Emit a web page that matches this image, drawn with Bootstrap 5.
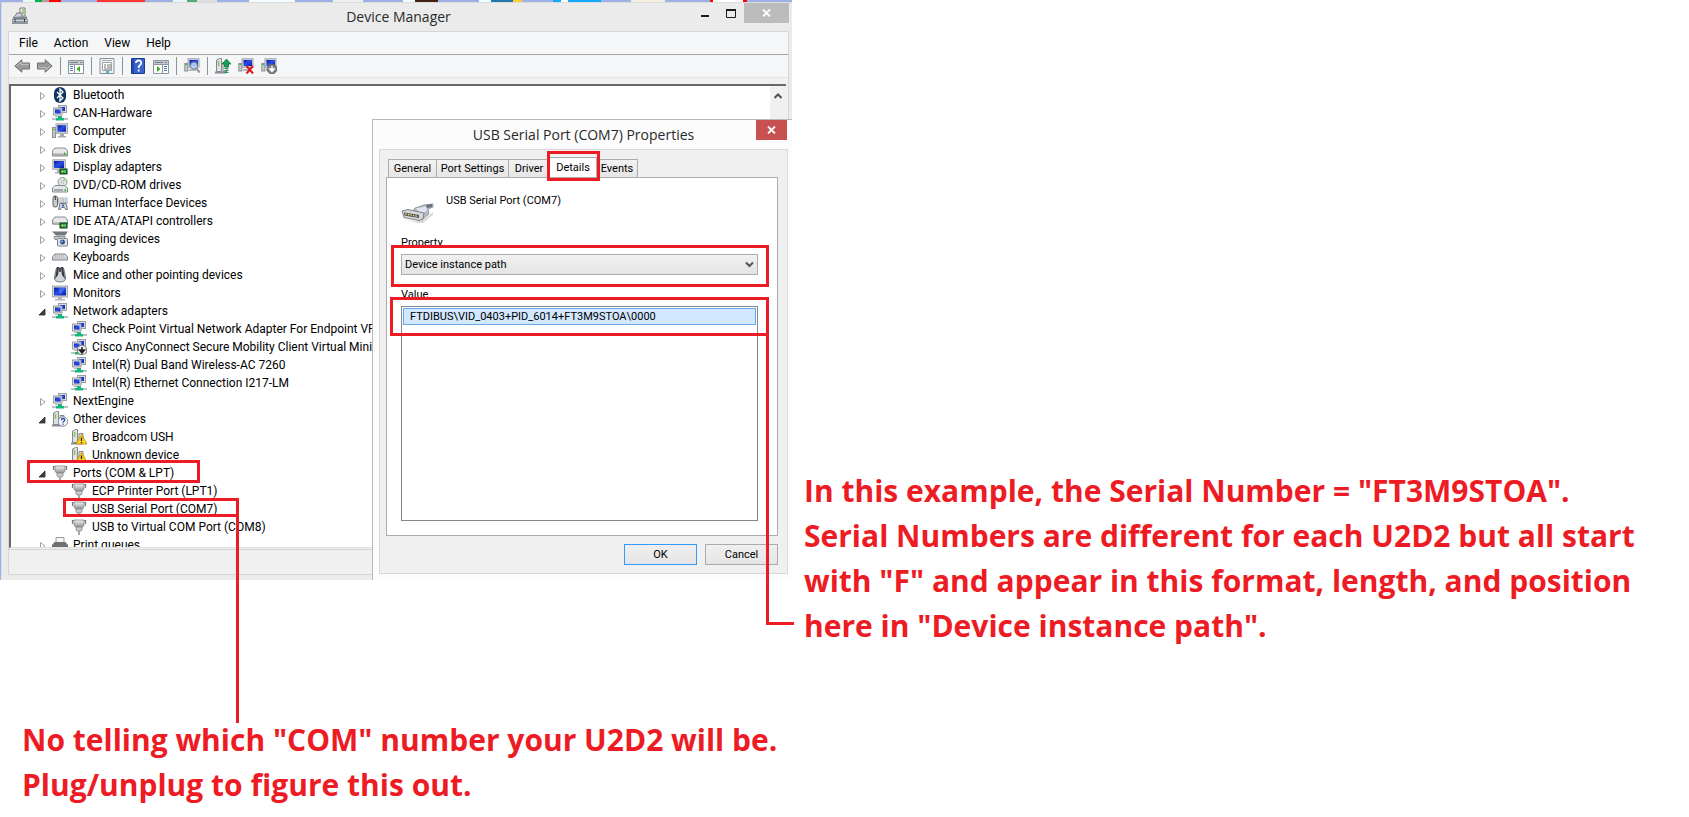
<!DOCTYPE html>
<html lang="en">
<head>
<meta charset="utf-8">
<meta name="viewport" content="width=device-width, initial-scale=1">
<title>Finding the U2D2 serial number</title>
<link href="https://cdn.jsdelivr.net/npm/bootstrap@5.3.0/dist/css/bootstrap.min.css" rel="stylesheet">
<style>
  :root { --ink: #ed1c24; }
  body { background: #fff; color: #000; font-family: Roboto, "Open Sans", sans-serif; font-size: 12px; line-height: 18px; }
  button, select { font-family: inherit; }
  .guide { display: grid; grid-template-columns: minmax(0, 792px) minmax(0, 1fr); }
  .callout-text { color: var(--ink); font: bold 30px/45px "Open Sans", "Noto Sans", sans-serif; }
  .callout-side { padding: 468px 0 0 12px; }
  .callout-below { grid-column: 1 / -1; padding: 69px 0 0 22px; }

  /* red pen marks */
  .pen { position: absolute; border: 3px solid var(--ink); pointer-events: none; z-index: 3; }
  .pen-ports { left: 27px; top: 460px; width: 173px; height: 23px; }
  .pen-com7 { left: 63px; top: 498px; width: 176px; height: 19px; }
  .pen-com7-line { left: 236px; top: 514px; height: 209px; border-width: 0 0 0 3px; }
  .pen-tab { inset: -7px -4px -4px -3px; }
  .pen-property { inset: -9px -11px -12px -10px; }
  .pen-value { left: -11px; right: -11px; top: -9px; height: 39px; }
  .pen-value-line { right: -36px; top: 27px; width: 28px; height: 292px; border-width: 0 0 3px 3px; }

  /* device manager window */
  .desk { background: #ebebeb; border-left: 1px solid #9db1e5; height: 580px; }
  .desk-strip { height: 2px; background: linear-gradient(90deg, #9db1e5 0 22px, #e8f8f8 22px 34px, #00b050 34px 41px, #b99 41px 48px, #f00 48px 60px, #9db1e5 60px 96px, #f33 96px 144px, #9db1e5 144px 172px, #e8f8f8 172px 186px, #5a7 186px 196px, #ddd 196px 216px, #9db1e5 216px 248px, #f4fcff 248px 294px, #9db1e5 294px 332px, #eee 332px 362px, #9db1e5 362px 402px, #eff 402px 414px, #421 414px 437px, #9db1e5 437px 478px, #eff 478px 490px, #27a 490px 512px, #fc3 512px 521px, #9db1e5 521px 552px, #1af 552px 560px, #fff 560px 567px, #1af 567px 600px, #9db1e5 600px 630px, #f5f0e0 630px 664px, #9db1e5 664px 709px, #f00 709px 712px, #fff 712px 742px, #f00 742px 746px, #9db1e5 746px); }
  .desk-frame { border-left: 1px solid #d3d9ea; border-top: 1px solid #dcdcdc; padding: 0 3px 0 6px; }
  .title-row { display: grid; grid-template-columns: 1fr auto 1fr; height: 28px; }
  .win-title { font: 14px/28px "Open Sans", sans-serif; color: #2a2a2a; }
  .win-btn { border: 0; padding: 0; background: none; height: 20px; width: 26px; display: flex; align-items: center; justify-content: center; }
  .win-close { width: 45px; background: #bcbcbc; }
  .client { border: 1px solid #d5d6d8; background: #f0f0f0; }
  .menu-row { height: 23px; background: #f5f6f7; border-bottom: 1px solid #a5a5a5; padding-left: 10px; gap: 16px; }
  .menu-row button, .tool-row button { border: 0; background: none; padding: 0; line-height: 16px; }
  .tool-row { height: 23px; background: #f5f6f7; border-bottom: 1px solid #e3e4e6; padding-left: 5px; gap: 7px; margin-bottom: 6px; }
  .tool-row svg, .tree svg { display: block; width: 16px; height: 16px; flex: none; }
  .tool-sep { width: 1px; height: 18px; background: #929292; }
  .tree-pane { height: 464px; background: #fff; border: solid #686868; border-width: 2px 0 0 2px; border-bottom: 1px solid #e0e0e0; overflow: hidden; margin-right: 2px; }
  .tree-scroll { width: 16px; background: #f0f0f0; padding: 6px 4px; }
  .tree { white-space: nowrap; }
  .tree .entry { display: flex; align-items: center; height: 18px; padding-left: 27px; }
  .tree .entry svg { margin-right: 5px; }
  .tree .entry svg.twist { width: 14px; margin: 0; }
  .tree ul .entry { padding-left: 60px; }
  .status-row { height: 25px; margin-top: 1px; border-top: 1px solid #d5d6d8; }

  /* properties dialog */
  .dialog-box { position: absolute; top: 119px; right: 0; width: 420px; height: 461px; z-index: 2; background: #fcfcfc; border: solid #b9b9b9; border-width: 1px 0 0 1px; padding: 0 4px 0 6px; font-size: 11px; line-height: 16px; }
  .dialog-title { position: relative; height: 29px; text-align: center; font: 14px/29px "Open Sans", sans-serif; color: #2a2a2a; }
  .dialog-close { position: absolute; top: 0; right: 1px; width: 31px; background: #c75050; }
  .dialog-client { border: 1px solid #d9d9d9; background: #f0f0f0; padding: 7px 9px 8px 6px; }
  .tab-strip { height: 20px; padding-left: 2px; }
  .tab-btn { position: relative; height: 18px; border: 1px solid #acacac; border-bottom: 0; border-left-width: 0; padding: 0; line-height: 17px; background: linear-gradient(#f2f2f2, #e6e6e6); color: #000; }
  .tab-btn:first-child { border-left-width: 1px; }
  .tab-btn.current { height: 20px; background: #fff; z-index: 2; }
  .tab-general { width: 49px; } .tab-port { width: 72px; } .tab-driver { width: 41px; } .tab-events { width: 41px; }
  .tab-details { width: 47px; }
  .page-pane { background: #fff; border: 1px solid #acacac; padding: 14px 19px 14px 14px; }
  .device-head { height: 43px; gap: 11px; line-height: 18px; }
  .field-label { display: block; margin-bottom: 3px; }
  .combo { display: block; width: 100%; height: 21px; appearance: none; border: 1px solid #acacac; border-radius: 0; background: linear-gradient(#f1f1f1, #e4e4e4); padding: 0 3px; line-height: 18px; color: #000; }
  .combo-arrow { position: absolute; right: 4px; top: 7px; pointer-events: none; }
  .value-list { height: 215px; border: 1px solid #828790; background: #fff; padding: 1px; }
  .value-list li { border: 1px solid #66a7e8; background: #d1e8ff; height: 17px; line-height: 15px; padding-left: 6px; }
  .push-btn { width: 73px; height: 21px; padding: 0; border: 1px solid #acacac; background: linear-gradient(#f0f0f0, #e5e5e5); line-height: 18px; color: #000; }
  .push-btn.default { border-color: #3399ff; }
</style>
</head>
<body>
<svg width="0" height="0" class="position-absolute" aria-hidden="true">
  <defs>
    <linearGradient id="screen" x1="0" y1="0" x2="1" y2="1"><stop offset="0" stop-color="#0a1a9c"/><stop offset=".5" stop-color="#2a50e8"/><stop offset="1" stop-color="#0818a0"/></linearGradient>
    <linearGradient id="metal" x1="0" y1="0" x2="0" y2="1"><stop offset="0" stop-color="#f4f4f4"/><stop offset="1" stop-color="#8c8f92"/></linearGradient>
    <symbol id="closed" viewBox="0 0 14 16"><path d="M2.5 5.500v7l4.500-3.500z" fill="#fff" stroke="#a0a0a0"/></symbol>
    <symbol id="open" viewBox="0 0 14 16"><path d="M7 6v6H1z" fill="#404040" stroke="#262626" stroke-width=".8"/></symbol>
    <symbol id="bt" viewBox="0 0 16 16"><rect x="2" width="12" height="16" rx="6" fill="#0f3562"/><path d="M5 5l6 6-3 3V2l3 3-6 6" fill="none" stroke="#fff" stroke-width="1.300"/></symbol>
    <symbol id="net" viewBox="0 0 16 16"><rect x="6.500" y=".5" width="8" height="7" fill="#d8dade" stroke="#9a9da3"/><rect x="8" y="2" width="5" height="4" fill="#1c38d0"/><rect x="1.500" y="3" width="8.500" height="7" fill="#d8dade" stroke="#9a9da3"/><rect x="3" y="4.500" width="5.500" height="4" fill="url(#screen)"/><path d="M3 11h6v1H3z" fill="#b4b6ba"/><path d="M0 14h16" stroke="#b8c4c0" stroke-width="2"/><path d="M4 13h2v-2h4v2h2v2.500H4z" fill="#14b878"/></symbol>
    <symbol id="netoff" viewBox="0 0 16 16"><use href="#net"/><circle cx="11" cy="11" r="4.800" fill="#eee" stroke="#777"/><path d="M11 8v4M8.500 11l2.500 3 2.500-3z" stroke="#222" stroke-width="1.500" fill="#222"/></symbol>
    <symbol id="pc" viewBox="0 0 16 16"><rect x=".5" y="4.500" width="3" height="10" fill="#c6c8cc" stroke="#8c8f94"/><path d="M1 6.500h2" stroke="#3c3"/><rect x="4" y=".8" width="11.500" height="9.500" fill="#d2d4d8" stroke="#a2a5aa"/><rect x="5.500" y="2.200" width="8.500" height="6.500" fill="url(#screen)"/><path d="M8 11h4v2h2v1.500H6V13h2z" fill="#a6a9ae"/></symbol>
    <symbol id="disk" viewBox="0 0 16 16"><path d="M3 7h10l2.500 3v5H.5v-5z" fill="#e6e8ea" stroke="#888b90"/><path d="M1 11h14v3.500H1z" fill="url(#metal)"/><path d="M12 11.500h1.500v2.500H12z" fill="#2c2"/></symbol>
    <symbol id="chip" viewBox="0 0 16 16"><rect x="8" y="10" width="7" height="5" fill="#1d7a3c" stroke="#0b4a20"/><path d="M9.500 11.500h2v2h-2z" fill="#d8e85a"/><path d="M13 11v3" stroke="#8f8"/></symbol>
    <symbol id="monitor" viewBox="0 0 16 16"><rect x=".5" y="1" width="15" height="11" fill="#d6d8dc" stroke="#a4a7ac"/><rect x="2" y="2.500" width="12" height="8" fill="url(#screen)"/><path d="M7 3h6L9 9H7z" fill="#5a8cff" opacity=".5"/><path d="M6 12h4v2h3v1.500H3V14h3z" fill="#b0b3b8"/></symbol>
    <symbol id="display" viewBox="0 0 16 16"><rect x=".8" y=".8" width="12.500" height="9.500" fill="#d6d8dc" stroke="#a4a7ac"/><rect x="2" y="2" width="10" height="7" fill="url(#screen)"/><path d="M5 11h4v2h1v1.500H3V13h2z" fill="#b0b3b8"/><use href="#chip"/></symbol>
    <symbol id="dvd" viewBox="0 0 16 16"><circle cx="10.500" cy="5" r="4.500" fill="#dfe6e4" stroke="#92969a"/><path d="M10.500 5l2-4 2 2z" fill="#9dd89a"/><circle cx="10.500" cy="5" r="1.300" fill="#fff" stroke="#999" stroke-width=".6"/><path d="M3 8.500h10l2.500 2.500v4H.5v-4z" fill="#e3e5e7" stroke="#85888c"/><path d="M2 13h9" stroke="#666"/><path d="M12.500 12h1.500v2h-1.500z" fill="#2c2"/></symbol>
    <symbol id="hid" viewBox="0 0 16 16"><rect x="1" y="1" width="4.500" height="11" rx="2.200" fill="#c9ccd0" stroke="#5c6066"/><path d="M3.300 1v4" stroke="#333"/><path d="M6 2.500h10v6H6z" fill="#b6bac0"/><path d="M7 4h9M7 6h9" stroke="#fff" stroke-dasharray="1.500 1"/><path d="M6.500 14.500l1.500-6h6l1.500 6h-2l-1-2h-3l-1 2z" fill="#d7dbe0" stroke="#6c7688"/><circle cx="11" cy="10.500" r="1.200" fill="#4567b8"/></symbol>
    <symbol id="ide" viewBox="0 0 16 16"><path d="M3 4h10l2.500 3v4H.5V7z" fill="#e6e8ea" stroke="#888b90"/><path d="M1 8h14v3.500H1z" fill="url(#metal)"/><use href="#chip"/></symbol>
    <symbol id="imaging" viewBox="0 0 16 16"><path d="M0 .5h16l-3 4H4z" fill="#70787c"/><path d="M2 5.500h11v3H3z" fill="#c9cdd0" stroke="#72777b" stroke-width=".8"/><rect x="5.500" y="7.500" width="10" height="7.500" rx="1" fill="#e4e7ea" stroke="#7a7f85"/><circle cx="10.500" cy="11" r="3" fill="#2d4d86" stroke="#fff" stroke-width=".8"/><circle cx="10" cy="10.500" r="1" fill="#9cc3f4"/></symbol>
    <symbol id="kbd" viewBox="0 0 16 16"><path d="M3 5h10l2.500 3v3H.5V8z" fill="#dcdee1" stroke="#7c8086"/><path d="M3 7h10M2.500 9h11" stroke="#8b8f95" stroke-dasharray="1 1"/></symbol>
    <symbol id="mouse" viewBox="0 0 16 16"><path d="M4.500 1h7l2 9q.5 5-5.500 5t-5.500-5z" fill="#d4d6d9" stroke="#74777c"/><path d="M5 0h2l-1 8-3 4zM11 0H9l1 8 3 4z" fill="#333a44"/><path d="M8 1v4" stroke="#222" stroke-width="1.500"/></symbol>
    <symbol id="tower" viewBox="0 0 16 16"><path d="M1.500 2l3-1.500h2v13h-5z" fill="#dfe1e3" stroke="#85888c"/><path d="M3.500 3v5" stroke="#8bc34a" stroke-width="1.500"/><path d="M0 14.500h11" stroke="#8a8d91" stroke-width="2"/><path d="M8 4.500h4v9H8z" fill="#ececec" stroke="#85888c"/></symbol>
    <symbol id="other" viewBox="0 0 16 16"><use href="#tower"/><circle cx="11" cy="10.500" r="4.800" fill="#f3f6fb" stroke="#8a8f98"/><path d="M9.300 9.300q0-1.800 1.700-1.800t1.700 1.500q0 1-1.700 2v.6M11 12.600v1.200" fill="none" stroke="#2445b0" stroke-width="1.300"/></symbol>
    <symbol id="warn" viewBox="0 0 16 16"><use href="#tower"/><path d="M10.500 5.500L16 15H5z" fill="#ffd51c" stroke="#b98b00" stroke-width=".8"/><path d="M10.500 8.500v3.500M10.500 13v1.200" stroke="#222" stroke-width="1.300"/></symbol>
    <symbol id="port" viewBox="0 0 16 16"><path d="M.8 1.500h14.400M1.500 1v4M14.500 1v4" stroke="#777b80" stroke-width="1.200"/><path d="M3 1h10v5l-1.500 2h-7L3 6z" fill="url(#metal)" stroke="#82868b" stroke-width=".8"/><path d="M5 8h6v3l-1 1H6l-1-1z" fill="#c7cacd" stroke="#85888d" stroke-width=".8"/><path d="M7 12h2v4H7z" fill="#a5a8ac"/></symbol>
    <symbol id="printer" viewBox="0 0 16 16"><path d="M4 .5h8V6H4z" fill="#f4f4f4" stroke="#999"/><path d="M2.500 5h11L16 8v5H0V8z" fill="#6e7174"/><path d="M3 10h10v4H3z" fill="#ddd"/></symbol>
    <symbol id="arrow" viewBox="0 0 16 16"><path d="M.8 8l7-6.200V5h7.700v6H7.800v3.200z" fill="#9a9a9a" stroke="#6c6c6c"/><path d="M2.500 8l4.500-4v2.300h7.500" fill="none" stroke="#c8c8c8"/></symbol>
    <symbol id="panes" viewBox="0 0 16 16"><path d="M.5 2.500h15v13H.5z" fill="#fff" stroke="#8d949c"/><path d="M1 3h14v3H1z" fill="#c4cad2"/><path d="M2 4.500h8M12 4.500h2" stroke="#77808a"/><path d="M6.500 6v9M1 6.500h14" stroke="#8d949c"/></symbol>
    <symbol id="tree-view" viewBox="0 0 16 16"><use href="#panes"/><path d="M2 8.500h3M2 10.500h3M2 12.500h3" stroke="#4a78c8"/><path d="M12 8v6l-3.500-3z" fill="#3aa820"/></symbol>
    <symbol id="action-view" viewBox="0 0 16 16"><path d="M.5 2.500h15v13H.5z" fill="#fff" stroke="#8d949c"/><path d="M1 3h14v3H1z" fill="#c4cad2"/><path d="M2 4.500h8M12 4.500h2" stroke="#77808a"/><path d="M9.500 6v9M1 6.500h14" stroke="#8d949c"/><path d="M4 8v6l3.500-3z" fill="#3aa820"/><path d="M11 8.500h3M11 10.500h3M11 12.500h3" stroke="#4a78c8"/></symbol>
    <symbol id="props" viewBox="0 0 16 16"><path d="M1 .5h14v15H1z" fill="#f2f3f5" stroke="#8a8f95"/><path d="M3 2.500h10" stroke="#aaa"/><path d="M3.500 4.500h9v8h-9z" fill="#fff" stroke="#9aa0a6"/><path d="M5 7h2M8 7h4M5 9h2M8 9h4M5 11h7" stroke="#777"/><path d="M7 14h3" stroke="#2ac0d8" stroke-width="2"/></symbol>
    <symbol id="help" viewBox="0 0 16 16"><path d="M1.500.5h13v15h-13z" fill="#3a62cc" stroke="#1d3c94"/><path d="M2 1h2v14H2z" fill="#2546a4"/><path d="M6 5q0-2.500 2.600-2.500T11.200 5q0 1.500-2.500 3.500v1.500M8.700 11.500v2" fill="none" stroke="#fff" stroke-width="1.800"/></symbol>
    <symbol id="pcs" viewBox="0 0 16 16"><rect x=".8" y="5.500" width="3" height="7.500" fill="#c6c8cc" stroke="#8c8f94"/><path d="M1.300 6.500h2" stroke="#2c2"/><rect x="4" y=".8" width="11" height="8.500" fill="#d2d4d8" stroke="#a2a5aa"/><rect x="5.500" y="2" width="8.500" height="6" fill="url(#screen)"/><path d="M5 11h7v2H5z" fill="#b4b7ba"/></symbol>
    <symbol id="scan" viewBox="0 0 16 16"><use href="#pcs"/><circle cx="10" cy="7.500" r="3.600" fill="#bcd8f4" fill-opacity=".85" stroke="#6e7c8c"/><path d="M12.500 10.500l3 4" stroke="#8a8d92" stroke-width="2"/></symbol>
    <symbol id="update" viewBox="0 0 16 16"><use href="#tower"/><path d="M11.500 1L16 6h-2.500v3H9.500V6H7z" fill="#18a05a" stroke="#0a6a38" stroke-width=".7"/><path d="M9.500 10.500h4M9.500 12.500h4M9.500 14.500h4" stroke="#18a05a"/></symbol>
    <symbol id="remove" viewBox="0 0 16 16"><use href="#pcs"/><path d="M8.500 8l6.500 7.500M15 8l-6.500 7.500" stroke="#e01818" stroke-width="2"/></symbol>
    <symbol id="disable" viewBox="0 0 16 16"><use href="#pcs"/><circle cx="11" cy="11" r="4.800" fill="#7c7f83" stroke="#666"/><path d="M11 8v4M8.800 11l2.200 2.500 2.200-2.500z" stroke="#fff" fill="#fff" stroke-width="1.300"/></symbol>
  </defs>
</svg>

<main class="guide">
  <section class="position-relative" aria-label="Device Manager">
    <div class="desk">
      <div class="desk-strip"></div>
      <div class="desk-frame">
        <header class="title-row">
          <svg class="mt-1 ms-1" width="16" height="18" viewBox="0 0 16 18" aria-hidden="true"><path d="M8 1h5v8H8z" fill="#f4f4f4" stroke="#777"/><path d="M11 2v5" stroke="#7c4" stroke-width="1.500"/><path d="M3 9l2-3h5v3" fill="#ccd" stroke="#778"/><path d="M1 9.500h14v3H1z" fill="#7d868e"/><path d="M0 12h16v5H0z" fill="#8f979e"/><path d="M1 13.500h14" stroke="#d5d9dc"/><path d="M3 12v3M12.500 12v3" stroke="#444"/></svg>
          <h1 class="win-title m-0">Device Manager</h1>
          <div class="d-flex justify-content-end">
            <button class="win-btn" aria-label="Minimize"><svg width="10" height="10"><path d="M1 7h8v2H1z" fill="#1b1b1b"/></svg></button>
            <button class="win-btn" aria-label="Maximize"><svg width="10" height="9"><path d="M.5 1h9v7.500h-9z" fill="none" stroke="#1b1b1b"/><path d="M0 1h10" stroke="#1b1b1b" stroke-width="2"/></svg></button>
            <button class="win-btn win-close" aria-label="Close"><svg width="9" height="8"><path d="M1 .5l7 7M8 .5l-7 7" stroke="#fff" stroke-width="1.800"/></svg></button>
          </div>
        </header>
        <div class="client">
          <nav class="menu-row d-flex align-items-center" aria-label="Menu">
            <button>File</button><button>Action</button><button>View</button><button>Help</button>
          </nav>
          <div class="tool-row d-flex align-items-center" role="toolbar" aria-label="Tools">
            <button aria-label="Back"><svg><use href="#arrow"/></svg></button>
            <button aria-label="Forward"><svg viewBox="0 0 16 16"><g transform="rotate(180 8 8)"><use href="#arrow"/></g></svg></button>
            <span class="tool-sep"></span>
            <button aria-label="Show console tree"><svg><use href="#tree-view"/></svg></button>
            <span class="tool-sep"></span>
            <button aria-label="Properties"><svg><use href="#props"/></svg></button>
            <span class="tool-sep"></span>
            <button aria-label="Help topics"><svg><use href="#help"/></svg></button>
            <button aria-label="Show action pane"><svg><use href="#action-view"/></svg></button>
            <span class="tool-sep"></span>
            <button aria-label="Scan for hardware changes"><svg><use href="#scan"/></svg></button>
            <span class="tool-sep"></span>
            <button aria-label="Update driver"><svg><use href="#update"/></svg></button>
            <button aria-label="Uninstall"><svg><use href="#remove"/></svg></button>
            <button aria-label="Disable"><svg><use href="#disable"/></svg></button>
          </div>
          <div class="tree-pane d-flex">
            <ul class="tree list-unstyled flex-grow-1 m-0 overflow-hidden">
              <li><div class="entry"><svg class="twist"><use href="#closed"/></svg><svg><use href="#bt"/></svg>Bluetooth</div></li>
              <li><div class="entry"><svg class="twist"><use href="#closed"/></svg><svg><use href="#net"/></svg>CAN-Hardware</div></li>
              <li><div class="entry"><svg class="twist"><use href="#closed"/></svg><svg><use href="#pc"/></svg>Computer</div></li>
              <li><div class="entry"><svg class="twist"><use href="#closed"/></svg><svg><use href="#disk"/></svg>Disk drives</div></li>
              <li><div class="entry"><svg class="twist"><use href="#closed"/></svg><svg><use href="#display"/></svg>Display adapters</div></li>
              <li><div class="entry"><svg class="twist"><use href="#closed"/></svg><svg><use href="#dvd"/></svg>DVD/CD-ROM drives</div></li>
              <li><div class="entry"><svg class="twist"><use href="#closed"/></svg><svg><use href="#hid"/></svg>Human Interface Devices</div></li>
              <li><div class="entry"><svg class="twist"><use href="#closed"/></svg><svg><use href="#ide"/></svg>IDE ATA/ATAPI controllers</div></li>
              <li><div class="entry"><svg class="twist"><use href="#closed"/></svg><svg><use href="#imaging"/></svg>Imaging devices</div></li>
              <li><div class="entry"><svg class="twist"><use href="#closed"/></svg><svg><use href="#kbd"/></svg>Keyboards</div></li>
              <li><div class="entry"><svg class="twist"><use href="#closed"/></svg><svg><use href="#mouse"/></svg>Mice and other pointing devices</div></li>
              <li><div class="entry"><svg class="twist"><use href="#closed"/></svg><svg><use href="#monitor"/></svg>Monitors</div></li>
              <li><div class="entry"><svg class="twist"><use href="#open"/></svg><svg><use href="#net"/></svg>Network adapters</div>
                <ul class="list-unstyled">
                  <li class="entry"><svg><use href="#net"/></svg>Check Point Virtual Network Adapter For Endpoint VPN</li>
                  <li class="entry"><svg><use href="#netoff"/></svg>Cisco AnyConnect Secure Mobility Client Virtual Miniport</li>
                  <li class="entry"><svg><use href="#net"/></svg>Intel(R) Dual Band Wireless-AC 7260</li>
                  <li class="entry"><svg><use href="#net"/></svg>Intel(R) Ethernet Connection I217-LM</li>
                </ul></li>
              <li><div class="entry"><svg class="twist"><use href="#closed"/></svg><svg><use href="#net"/></svg>NextEngine</div></li>
              <li><div class="entry"><svg class="twist"><use href="#open"/></svg><svg><use href="#other"/></svg>Other devices</div>
                <ul class="list-unstyled">
                  <li class="entry"><svg><use href="#warn"/></svg>Broadcom USH</li>
                  <li class="entry"><svg><use href="#warn"/></svg>Unknown device</li>
                </ul></li>
              <li><div class="entry"><svg class="twist"><use href="#open"/></svg><svg><use href="#port"/></svg>Ports (COM &amp; LPT)</div>
                <ul class="list-unstyled">
                  <li class="entry"><svg><use href="#port"/></svg>ECP Printer Port (LPT1)</li>
                  <li class="entry"><svg><use href="#port"/></svg>USB Serial Port (COM7)</li>
                  <li class="entry"><svg><use href="#port"/></svg>USB to Virtual COM Port (COM8)</li>
                </ul></li>
              <li><div class="entry"><svg class="twist"><use href="#closed"/></svg><svg><use href="#printer"/></svg>Print queues</div></li>
            </ul>
            <div class="tree-scroll"><svg class="d-block" width="8" height="8"><path d="M.5 6L4 2.500 7.500 6" fill="none" stroke="#505050" stroke-width="2"/></svg></div>
          </div>
          <div class="status-row"></div>
        </div>
      </div>
    </div>
    <span class="pen pen-ports"></span>
    <span class="pen pen-com7"></span>
    <span class="pen pen-com7-line"></span>

    <section class="dialog-box" role="dialog" aria-label="USB Serial Port (COM7) Properties">
      <header class="dialog-title">USB Serial Port (COM7) Properties
        <button class="win-btn dialog-close" aria-label="Close dialog"><svg width="9" height="8"><path d="M1 .5l7 7M8 .5l-7 7" stroke="#fff" stroke-width="1.800"/></svg></button>
      </header>
      <div class="dialog-client">
        <div class="tab-strip d-flex align-items-end" role="tablist">
          <button class="tab-btn tab-general" role="tab">General</button>
          <button class="tab-btn tab-port" role="tab">Port Settings</button>
          <button class="tab-btn tab-driver" role="tab">Driver</button>
          <button class="tab-btn tab-details current" role="tab" aria-selected="true">Details<span class="pen pen-tab"></span></button>
          <button class="tab-btn tab-events" role="tab">Events</button>
        </div>
        <div class="page-pane" role="tabpanel">
          <div class="device-head d-flex">
            <svg width="34" height="34" viewBox="0 0 34 34" aria-hidden="true"><path d="M2 26q12 6 22 1l8-7v3l-10 8q-10 0-20-5z" fill="#d8d8d8"/><path d="M14 16l9-3 9-1v3l-5 2 1 5-7 6-13-5z" fill="#b4bcc4" stroke="#858e97" stroke-width=".8"/><path d="M15 16.500l10-2 1 4-6 4z" fill="#dfe5ea"/><path d="M25 13l6-1v3l-5 1z" fill="#68727c"/><path d="M1 19l6-1.500 16 3.500-1 6-4 1.500-15-3z" fill="#d3d7da" stroke="#6f777f" stroke-width=".9"/><path d="M3 20.500l15 2.500v3L3.500 23.500z" fill="#4c4e42"/><path d="M4.500 22l12.500 2.500" stroke="#e8dc90" stroke-width="1.300" stroke-dasharray="1.500 1"/></svg>
            <span>USB Serial Port (COM7)</span>
          </div>
          <label class="field-label" for="property">Property</label>
          <div class="position-relative mb-2 pb-1">
            <div class="position-relative">
              <select class="combo" id="property"><option>Device instance path</option></select>
              <svg class="combo-arrow" width="9" height="7"><path d="M1 1.500l3.500 3.500L8 1.500" fill="none" stroke="#555" stroke-width="2"/></svg>
              <span class="pen pen-property"></span>
            </div>
          </div>
          <span class="field-label" id="value-label">Value</span>
          <div class="position-relative">
            <ul class="value-list list-unstyled m-0" aria-labelledby="value-label"><li>FTDIBUS\VID_0403+PID_6014+FT3M9STOA\0000</li></ul>
            <span class="pen pen-value"></span>
            <span class="pen pen-value-line"></span>
          </div>
        </div>
        <div class="d-flex justify-content-end gap-2 mt-2">
          <button class="push-btn default">OK</button>
          <button class="push-btn">Cancel</button>
        </div>
      </div>
    </section>
  </section>

  <p class="callout-text callout-side m-0">In this example, the Serial Number = "FT3M9STOA".<br>Serial Numbers are different for each U2D2 but all start<br>with "F" and appear in this format, length, and position<br>here in "Device instance path".</p>
  <p class="callout-text callout-below m-0">No telling which "COM" number your U2D2 will be.<br>Plug/unplug to figure this out.</p>
</main>
<script src="https://cdn.jsdelivr.net/npm/bootstrap@5.3.0/dist/js/bootstrap.bundle.min.js"></script>
</body>
</html>
